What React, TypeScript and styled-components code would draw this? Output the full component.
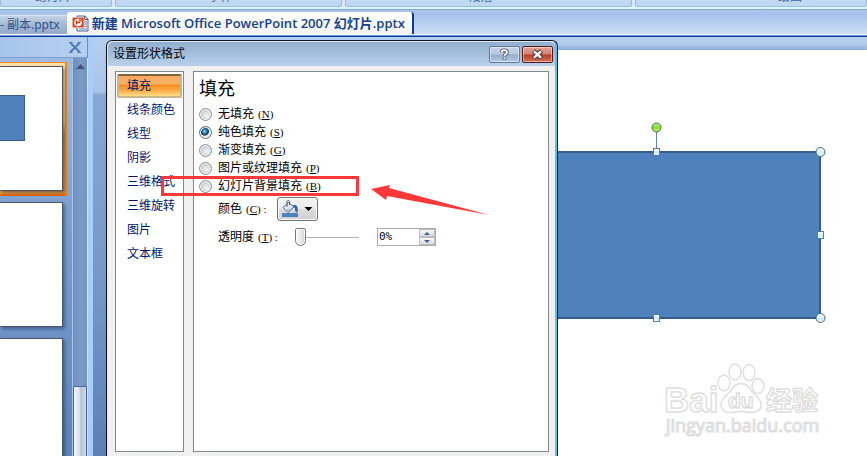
import React, { useState } from "react";
import styled, { createGlobalStyle, css } from "styled-components";

const GlobalStyle = createGlobalStyle`
  *, *::before, *::after { box-sizing: border-box; }
  body { margin: 0; overflow: hidden; }
  button, input { font: inherit; color: inherit; margin: 0; padding: 0; }
`;

const Window = styled.div`
  position: relative;
  display: flex;
  flex-direction: column;
  min-height: 100vh;
  overflow: hidden;
  background: #a3c1e9;
  font: 12px/18px "Open Sans", "Noto Sans CJK SC", sans-serif;
  color: #000;
`;

/* ribbon */

const Ribbon = styled.div`
  display: grid;
  grid-template-columns: 112fr 227fr 287fr 232fr;
  gap: 3px;
  height: 10px;
  padding-bottom: 3px;
  background: #d9e8f7;
  border-bottom: 1px solid #8aa9cf;
  box-shadow: inset 0 -2px 0 #d8f8ff;
`;

const RibbonGroup = styled.div<{ $left?: number; $right?: number }>`
  display: flex;
  align-items: flex-end;
  justify-content: center;
  height: 7px;
  padding: 0 ${(p) => p.$right ?? 0}px 2px ${(p) => p.$left ?? 0}px;
  overflow: hidden;
  border: 1px solid #9dbcdc;
  border-top: 0;
  border-radius: 0 0 3px 3px;
  background: #c1d9f0;
  color: #3e6aaa;
  line-height: 14px;
`;

/* document tabs */

const TabBar = styled.div`
  display: flex;
  align-items: flex-end;
  height: 27px;
  padding-bottom: 2px;
  background: linear-gradient(#a9c2e8, #a6c4ee 20%, #d3e1f7);
  border-bottom: 1px solid #0a3c9c;
  box-shadow: inset 0 -1px 0 #6d97d6, inset 0 -2px 0 #fff;
`;

const Tab = styled.button<{ $active?: boolean }>`
  display: flex;
  align-items: center;
  gap: 3px;
  flex: none;
  border: 0;
  white-space: nowrap;
  ${(p) =>
    p.$active
      ? css`
          height: 22px;
          padding: 0 7px 0 5px;
          border-right: 2px solid #0a3c9c;
          border-radius: 3px 3px 0 0;
          background: linear-gradient(#fff, #f2f2f2);
          color: #15428b;
          font-size: 13px;
          font-weight: 600;
        `
      : css`
          height: 19px;
          padding: 0 7px 0 0;
          border-top: 1px solid #d8e2f0;
          background: linear-gradient(#c5d3e6, #a3b7d3 50%, #95abc9);
          color: #2f548e;
          font-family: "Noto Sans", "Noto Sans CJK SC", sans-serif;
        `}
`;

/* workspace */

const Workspace = styled.div`
  position: relative;
  display: flex;
  flex: 1;
  background: linear-gradient(#b5cff0, #a8c4e8 13%, #86a8d5 14%, #7397c8 60%, #5a80b6);
`;

const SlidePane = styled.aside`
  display: flex;
  flex-direction: column;
  width: 93px;
  border-right: 5px solid #a9cdfb;
`;

const PaneHeader = styled.div`
  display: flex;
  align-items: center;
  justify-content: flex-end;
  height: 21px;
  padding-right: 6px;
  background: linear-gradient(90deg, #a6c5ed, #b7cfee);
  border-bottom: 1px solid #7f9fd0;
  border-right: 1px solid #6a8cc4;
`;

const PlainButton = styled.button`
  display: flex;
  border: 0;
  background: none;
`;

const PaneBody = styled.div`
  display: flex;
  flex: 1;
  min-height: 0;
  background: linear-gradient(#9dbbe2, #7c9fd0 40%, #5c84ba);
`;

const ThumbList = styled.div`
  display: flex;
  flex-direction: column;
  gap: 2px;
  flex: 1;
  height: 398px;
  padding-top: 4px;
  overflow: hidden;
`;

const ThumbFrame = styled.div<{ $selected?: boolean }>`
  flex: none;
  width: 67px;
  padding: 3px 2px 3px 0;
  border: solid transparent;
  border-width: 1px 2px 2px 0;
  ${(p) =>
    p.$selected &&
    css`
      border-color: #ef8a22 #ef8a22 #e2690c;
      background: linear-gradient(#ffe0a6, #f9c47a 45%, #cd8438 55%, #e6953c);
    `}
`;

const Thumb = styled.div`
  height: 125px;
  padding-top: 28px;
  border: 1px solid #4f565f;
  border-left: 0;
  background: #fff;
  box-shadow: 2px 2px 3px rgba(20, 40, 80, 0.45);
`;

const ThumbShape = styled.div`
  width: 25px;
  height: 46px;
  border: 1px solid #385d8a;
  border-left: 0;
  background: #4f81bd;
`;

const Scrollbar = styled.div`
  display: flex;
  flex-direction: column;
  align-items: center;
  justify-content: space-between;
  width: 16px;
  padding-top: 6px;
  border-left: 1px solid #a9c5ec;
  border-right: 1px solid #d3e6fc;
  background: linear-gradient(90deg, #6c8dbd, #7b9bc8 50%, #7292c2);
`;

const ScrollThumb = styled.div`
  width: 14px;
  height: 70px;
  border: 1px solid #4a66a0;
  border-bottom: 0;
  border-radius: 2px 2px 0 0;
  background: linear-gradient(90deg, #f4f6fa, #dce3ec 45%, #b6c4d8 55%, #cdd8e6);
`;

const Canvas = styled.main`
  position: relative;
  flex: 1;
  margin: 13px 0 0 14px;
  background: #fff;
  box-shadow: 0 -1px 0 #8dacd8, 0 -4px 3px rgba(110, 145, 195, 0.4);
`;

const ShapeLayer = styled.svg`
  position: absolute;
  left: 380px;
  top: 70px;
`;

const Watermark = styled.svg`
  position: absolute;
  left: 555px;
  top: 308px;
`;

/* dialog */

const Dialog = styled.section`
  position: absolute;
  left: 106px;
  top: 3px;
  bottom: 0;
  width: 452px;
  display: flex;
  flex-direction: column;
  border: 1px solid #111;
  border-bottom: 0;
  border-radius: 6px 6px 0 0;
  background: #f0f0f0;
  box-shadow: inset 1px 1px 0 #d8eafc, inset -2px 0 0 #46c8ee;
`;

const TitleBar = styled.header`
  display: flex;
  align-items: center;
  gap: 2px;
  height: 24px;
  margin: 1px 2px 0 1px;
  padding: 0 2px 0 5px;
  border-radius: 5px 5px 0 0;
  background: linear-gradient(#94aecd, #a4bfdc 50%, #bad1ec);
`;

const DialogTitle = styled.h1`
  flex: 1;
  margin: 0;
  font-size: 12px;
  font-weight: 400;
`;

const CaptionButton = styled.button<{ $danger?: boolean }>`
  display: flex;
  align-items: center;
  justify-content: center;
  width: 31px;
  height: 17px;
  border: 1px solid ${(p) => (p.$danger ? "#56191c" : "#61799b")};
  border-radius: 2px;
  box-shadow: inset 0 0 0 1px rgba(255, 255, 255, 0.45);
  background: ${(p) =>
    p.$danger
      ? "linear-gradient(#e2a398, #d58171 48%, #b43a22 52%, #d2755e)"
      : "linear-gradient(#c3d4e8, #b4c8df 48%, #94adca 52%, #b1c9e3)"};
`;

const DialogBody = styled.div`
  display: flex;
  flex: 1;
  gap: 9px;
  padding: 5px 8px 4px;
`;

const Nav = styled.nav`
  display: flex;
  flex-direction: column;
  width: 69px;
  padding: 2px 1px;
  border: 1px solid #828790;
  background: #fff;
`;

const NavItem = styled.button<{ $active?: boolean }>`
  height: 24px;
  padding-left: 9px;
  border: 1px solid transparent;
  background: none;
  color: #00156e;
  text-align: left;
  white-space: nowrap;
  ${(p) =>
    p.$active &&
    css`
      border: 2px solid #c9b78d;
      border-top-color: #7d6440;
      border-radius: 2px;
      padding-left: 8px;
      background: linear-gradient(#f6a963, #f9b263 40%, #f58b1f 45%, #fbb04c 75%, #ffe08a);
    `}
`;

const Panel = styled.form`
  flex: 1;
  padding: 6px 5px;
  border: 1px solid #828790;
  background: #fff;
`;

const PanelTitle = styled.h2`
  margin: 0 0 7px;
  font-size: 18px;
  line-height: 20px;
  font-weight: 400;
`;

const RadioRow = styled.label`
  display: flex;
  align-items: center;
  gap: 6px;
  height: 18px;
`;

const Radio = styled.input`
  appearance: none;
  width: 13px;
  height: 13px;
  border: 1px solid #8e8f8f;
  border-radius: 50%;
  background: radial-gradient(circle at 60% 60%, #f4f4f4, #c9cdd1 60%, #e4e4e4);
  box-shadow: inset 0 0 0 1px #f4f4f4;
  &:checked {
    border-color: #5b6f80;
    background: radial-gradient(circle at 42% 40%, #a9e4fb 0, #2b86be 20%, #10334f 42%, #dfe8ee 50%);
  }
`;

const Key = styled.span`
  margin-left: 4px;
  font-family: "Liberation Serif", serif;
  font-size: 11px;
`;

const Field = styled.div<{ $label: number }>`
  display: flex;
  align-items: center;
  height: 28px;
  padding-left: 19px;
  > label {
    width: ${(p) => p.$label}px;
  }
`;

const ColorButton = styled.button`
  display: flex;
  align-items: center;
  justify-content: center;
  width: 41px;
  height: 24px;
  border: 1px solid #707070;
  border-radius: 3px;
  background: linear-gradient(#f3f3f3, #ebebeb 48%, #dcdcdc 52%, #d0d0d0);
  box-shadow: inset 0 0 0 1px #fbfbfb;
`;

const Slider = styled.input`
  appearance: none;
  width: 64px;
  height: 20px;
  margin-right: 18px;
  background: linear-gradient(#b2b2b2, #b2b2b2) center / 100% 1px no-repeat;
  &::-webkit-slider-thumb {
    appearance: none;
    width: 11px;
    height: 18px;
    border: 1px solid #777;
    border-radius: 2px 2px 6px 6px;
    background: linear-gradient(90deg, #fafafa, #e9e9e9 50%, #d2d2d2);
    box-shadow: inset 0 0 0 1px #fbfbfb;
  }
`;

const SpinBox = styled.div`
  display: flex;
  width: 59px;
  height: 18px;
  border: 1px solid #abadb3;
  background: #fff;
`;

const SpinInput = styled.input`
  flex: 1;
  min-width: 0;
  padding-left: 1px;
  border: 0;
  outline: 0;
  background: none;
  font-family: "DejaVu Sans Mono", monospace;
  font-size: 11px;
`;

const SpinButtons = styled.div`
  display: grid;
  grid-template-rows: 1fr 1fr;
  width: 16px;
`;

const SpinButton = styled.button`
  display: flex;
  align-items: center;
  justify-content: center;
  border: 1px solid #b9bcc2;
  background: linear-gradient(#f8f8f8, #dcdcdc);
`;

/* annotations over the window */

const Highlight = styled.div`
  position: absolute;
  left: 161px;
  top: 176px;
  width: 198px;
  height: 20px;
  border: 3px solid #fc3938;
  pointer-events: none;
`;

const Arrow = styled.svg`
  position: absolute;
  left: 370px;
  top: 182px;
  pointer-events: none;
`;

const PptIcon = () => (
  <svg width="17" height="17" viewBox="0 0 17 17" aria-hidden="true">
    <path d="M5 1h8l3 3v12H5z" fill="#eef3fb" stroke="#4a6494" />
    <path d="M12.500 1v3.500H16" fill="#b9cbe6" stroke="#4a6494" />
    <path d="M12.500 7h2.500M12.500 9h2.500M7 14h8M12.500 11.500h2.500" stroke="#6585b8" />
    <rect x="0.500" y="2.500" width="11.500" height="10" rx="1" fill="#d8492c" stroke="#eba793" />
    <circle cx="6" cy="7.500" r="3.800" fill="#fff" />
    <path d="M6.500 3.800v3.200h3.200a3.400 3.400 0 0 0-3.200-3.200z" fill="#e88467" />
    <path d="M4.500 5.500v4M4.500 7.500H8" stroke="#c43a1e" strokeWidth="1.400" />
  </svg>
);

const BucketIcon = () => (
  <svg width="36" height="18" viewBox="0 0 36 18" aria-hidden="true">
    <path d="M13 5.500c3.500-1.500 5.500 1 4.500 7-1.500 0-2.500-.5-2.500-4z" fill="#2f65b0" />
    <path d="M3 7.500 8.500 2.500 14 7 8 12.500z" fill="#dfe9f4" stroke="#44648f" />
    <path d="M5 9.500 12.500 8 8 12z" fill="#a9c4e4" />
    <path d="M7 7V1.500C7 .2 9.500.2 9.500 1.500V5" fill="none" stroke="#55606e" />
    <rect x="2" y="13" width="16" height="4" fill="#4f81bd" />
    <path d="M24.500 7h8l-4 4z" fill="#000" />
  </svg>
);

const squareHandles: [number, number][] = [
  [169, 32],
  [169, 198],
  [333, 115],
];
const roundHandles: [number, number][] = [
  [333, 32],
  [333, 198],
];

const SelectedShape = () => (
  <ShapeLayer width="342" height="206" viewBox="0 0 342 206" aria-label="矩形">
    <defs>
      <linearGradient id="handle" x1="0" y1="0" x2="0" y2="1">
        <stop offset="0" stopColor="#fff" />
        <stop offset="0.6" stopColor="#c9eef5" />
        <stop offset="1" stopColor="#f0fcfe" />
      </linearGradient>
      <linearGradient id="rotate" x1="0" y1="0" x2="0" y2="1">
        <stop offset="0" stopColor="#b9f58a" />
        <stop offset="0.5" stopColor="#7ce02c" />
        <stop offset="1" stopColor="#b4f876" />
      </linearGradient>
    </defs>
    <rect x="5" y="32" width="328" height="166" fill="#4f81bd" stroke="#385d8a" strokeWidth="2" />
    <path d="M169.500 12v16" stroke="#5f83b4" />
    <circle cx="169.500" cy="7.500" r="4.500" fill="url(#rotate)" stroke="#58664f" />
    {squareHandles.map(([x, y]) => (
      <rect key={`${x}-${y}`} x={x - 2.5} y={y - 3.5} width="6" height="7" fill="url(#handle)" stroke="#587ba6" />
    ))}
    {roundHandles.map(([x, y]) => (
      <circle key={`${x}-${y}`} cx={x + 0.5} cy={y} r="4.500" fill="url(#handle)" stroke="#56606e" />
    ))}
  </ShapeLayer>
);

const BaiduMark = () => (
  <Watermark width="162" height="84" viewBox="0 0 162 84">
    <g fill="#fff" stroke="#dedede" strokeWidth="1.400" strokeLinejoin="round">
      <text x="2" y="54" fontFamily="Liberation Sans, sans-serif" fontWeight="700" fontSize="35">Bai</text>
      <path d="M79 25.500c5 0 8 3 10 7 3 4 9 7 10 13 1 6-4 9-9 9-4 0-7-1-11-1s-7 1-11 1c-6 0-10-4-9-9 1-6 7-9 10-13 2-4 5-7 10-7z" />
      <ellipse cx="62" cy="25" rx="6" ry="8" />
      <ellipse cx="73" cy="14" rx="6" ry="8" />
      <ellipse cx="87" cy="14.500" rx="6" ry="8" />
      <ellipse cx="96" cy="28" rx="6" ry="7.500" />
      <text x="66" y="50" fontFamily="Liberation Sans, sans-serif" fontWeight="700" fontSize="21">du</text>
      <text x="104" y="52" fontFamily="Noto Sans CJK SC, sans-serif" fontWeight="700" fontSize="26">经验</text>
      <text x="4" y="74" fontFamily="Open Sans, sans-serif" fontSize="18" strokeWidth="1.200">jingyan.baidu.com</text>
    </g>
  </Watermark>
);

const navItems = ["填充", "线条颜色", "线型", "阴影", "三维格式", "三维旋转", "图片", "文本框"];

const fillOptions = [
  { text: "无填充", accel: "N" },
  { text: "纯色填充", accel: "S" },
  { text: "渐变填充", accel: "G" },
  { text: "图片或纹理填充", accel: "P" },
  { text: "幻灯片背景填充", accel: "B" },
];

const Accel = ({ letter, suffix = "" }: { letter: string; suffix?: string }) => (
  <Key>
    (<u>{letter}</u>){suffix}
  </Key>
);

export default function App() {
  const [section, setSection] = useState("填充");
  const [fill, setFill] = useState("S");
  const [opacity, setOpacity] = useState(0);
  const step = (by: number) => setOpacity((v) => Math.min(100, Math.max(0, v + by)));

  return (
    <Window>
      <GlobalStyle />
      <Ribbon>
        <RibbonGroup $right={6}>幻灯片</RibbonGroup>
        <RibbonGroup $right={16}>字体</RibbonGroup>
        <RibbonGroup $right={16}>段落</RibbonGroup>
        <RibbonGroup $left={78}>绘图</RibbonGroup>
      </Ribbon>
      <TabBar>
        <Tab>- 副本.pptx</Tab>
        <Tab $active>
          <PptIcon />
          新建 Microsoft Office PowerPoint 2007 幻灯片.pptx
        </Tab>
      </TabBar>

      <Workspace>
        <SlidePane>
          <PaneHeader>
            <PlainButton aria-label="关闭窗格">
              <svg width="12" height="11" viewBox="0 0 12 11">
                <path d="M1.500 1 10.500 10M10.500 1 1.500 10" stroke="#4a7ab8" strokeWidth="2" />
                <path d="M0 .5h3.500M8.500.5H12M0 10.500h3.500M8.500 10.500H12" stroke="#4a7ab8" />
              </svg>
            </PlainButton>
          </PaneHeader>
          <PaneBody>
            <ThumbList>
              <ThumbFrame $selected>
                <Thumb>
                  <ThumbShape />
                </Thumb>
              </ThumbFrame>
              <ThumbFrame>
                <Thumb />
              </ThumbFrame>
              <ThumbFrame>
                <Thumb />
              </ThumbFrame>
            </ThumbList>
            <Scrollbar>
              <PlainButton aria-label="向上滚动">
                <svg width="9" height="5" viewBox="0 0 9 5">
                  <path d="M4.500 0 9 5H0z" fill="#41557c" />
                </svg>
              </PlainButton>
              <ScrollThumb />
            </Scrollbar>
          </PaneBody>
        </SlidePane>

        <Canvas>
          <SelectedShape />
          <BaiduMark />
        </Canvas>

        <Dialog role="dialog" aria-labelledby="dialog-title">
          <TitleBar>
            <DialogTitle id="dialog-title">设置形状格式</DialogTitle>
            <CaptionButton aria-label="帮助">
              <svg width="11" height="13" viewBox="0 0 11 13" fill="none">
                <path d="M2.500 4.500C2.500 1.500 8 1.500 8 4.200 8 6 5.500 6 5.500 8.200M5.500 9.500v2" stroke="#4b5566" strokeWidth="3.600" />
                <path d="M2.500 4.500C2.500 1.500 8 1.500 8 4.200 8 6 5.500 6 5.500 8M5.500 9.500v1.500" stroke="#fff" strokeWidth="1.800" />
              </svg>
            </CaptionButton>
            <CaptionButton $danger aria-label="关闭">
              <svg width="13" height="11" viewBox="0 0 13 11">
                <path d="M2.500 2 10.500 9M10.500 2 2.500 9" stroke="#4e3a46" strokeWidth="4.600" />
                <path d="M3 2.400 10 8.600M10 2.400 3 8.600" stroke="#fff" strokeWidth="2.400" />
              </svg>
            </CaptionButton>
          </TitleBar>
          <DialogBody>
            <Nav>
              {navItems.map((item) => (
                <NavItem key={item} $active={item === section} onClick={() => setSection(item)}>
                  {item}
                </NavItem>
              ))}
            </Nav>
            <Panel onSubmit={(e) => e.preventDefault()}>
              <PanelTitle>填充</PanelTitle>
              {fillOptions.map(({ text, accel }) => (
                <RadioRow key={accel}>
                  <Radio type="radio" name="fill" checked={fill === accel} onChange={() => setFill(accel)} />
                  <span>
                    {text}
                    <Accel letter={accel} />
                  </span>
                </RadioRow>
              ))}
              <Field $label={59}>
                <label htmlFor="color">
                  颜色
                  <Accel letter="C" suffix=" :" />
                </label>
                <ColorButton id="color" type="button">
                  <BucketIcon />
                </ColorButton>
              </Field>
              <Field $label={77}>
                <label htmlFor="opacity">
                  透明度
                  <Accel letter="T" suffix=" :" />
                </label>
                <Slider
                  id="opacity"
                  type="range"
                  min={0}
                  max={100}
                  value={opacity}
                  onChange={(e) => setOpacity(Number(e.target.value))}
                />
                <SpinBox>
                  <SpinInput
                    aria-label="透明度"
                    value={`${opacity}%`}
                    onChange={(e) => setOpacity(Math.min(100, parseInt(e.target.value, 10) || 0))}
                  />
                  <SpinButtons>
                    <SpinButton type="button" aria-label="增加" onClick={() => step(1)}>
                      <svg width="6" height="3" viewBox="0 0 6 3">
                        <path d="M3 0 6 3H0z" fill="#3f5fae" />
                      </svg>
                    </SpinButton>
                    <SpinButton type="button" aria-label="减少" onClick={() => step(-1)}>
                      <svg width="6" height="3" viewBox="0 0 6 3">
                        <path d="M0 0h6L3 3z" fill="#3f5fae" />
                      </svg>
                    </SpinButton>
                  </SpinButtons>
                </SpinBox>
              </Field>
            </Panel>
          </DialogBody>
        </Dialog>
      </Workspace>

      <Highlight />
      <Arrow width="120" height="36" viewBox="0 0 120 36" aria-hidden="true">
        <path d="M1 7 20 3 19 6 119 33 17 14 16 18z" fill="#fc3938" />
      </Arrow>
    </Window>
  );
}
